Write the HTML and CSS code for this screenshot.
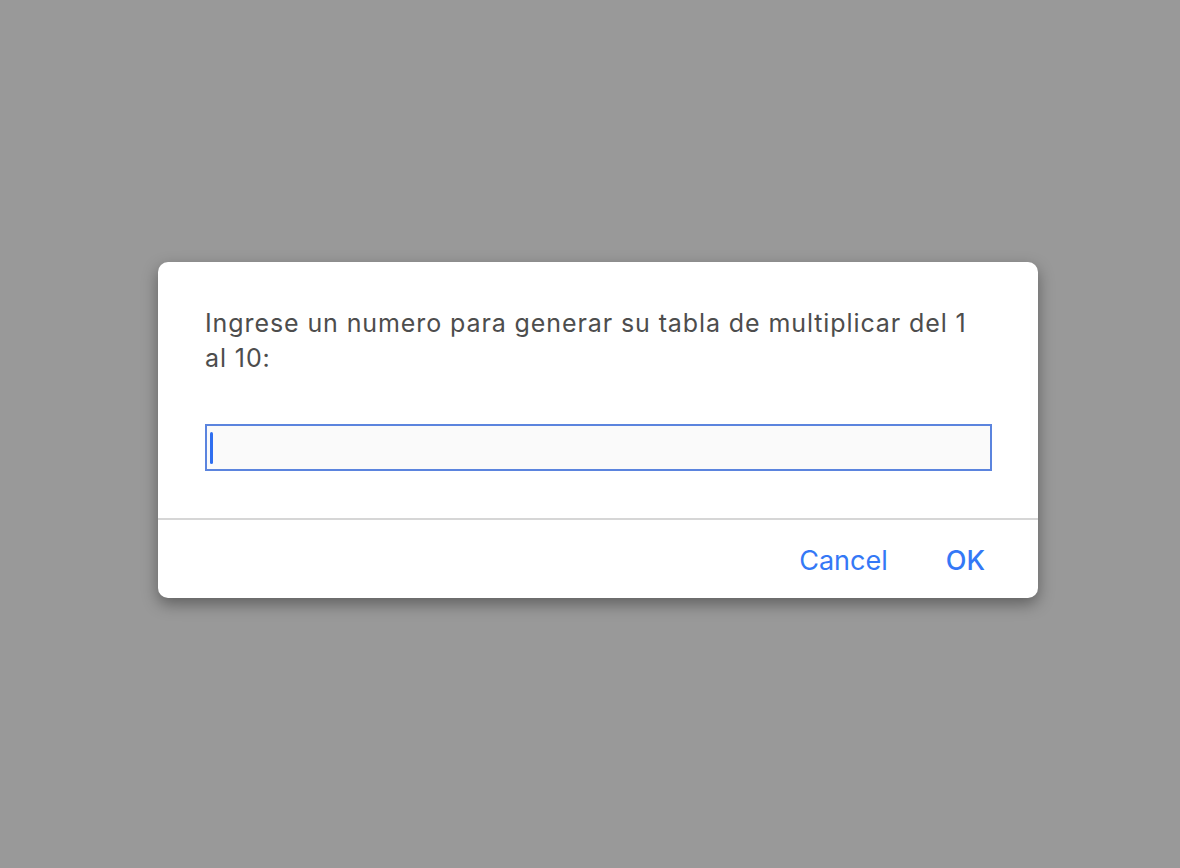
FILE: index.html
```html
<!DOCTYPE html>
<html lang="es">
<head>
<meta charset="utf-8">
<title>Prompt</title>
<link rel="stylesheet" href="styles.css">
</head>
<body>
<div class="overlay">
  <div class="dialog">
    <div class="body">
      <p class="message">Ingrese un numero para generar su tabla de multiplicar del 1 al 10:</p>
      <div class="field"><span class="caret"></span></div>
    </div>
    <div class="footer">
      <button class="btn">Cancel</button>
      <button class="btn ok">OK</button>
    </div>
  </div>
</div>
</body>
</html>
```
FILE: styles.css
```css
html, body {
  margin: 0;
  padding: 0;
  height: 100%;
}
body {
  background: #999999;
  font-family: Inter, "Noto Sans", sans-serif;
}
.overlay {
  height: 100%;
  display: flex;
  justify-content: center;
  padding-top: 262px;
  padding-left: 16px;
  box-sizing: border-box;
}
.dialog {
  width: 880px;
  height: 336px;
  background: #ffffff;
  border-radius: 10px;
  box-shadow: 0 6px 16px rgba(0, 0, 0, 0.38);
  display: flex;
  flex-direction: column;
  box-sizing: border-box;
}
.body {
  padding: 44px 46px 0 47px;
  height: 258px;
  box-sizing: border-box;
  border-bottom: 2px solid #d6d6d6;
}
.message {
  margin: 0;
  font-size: 25px;
  line-height: 35px;
  letter-spacing: 0.9px;
  color: #4d4d4d;
  width: 787px;
}
.field {
  margin-top: 48px;
  height: 47px;
  box-sizing: border-box;
  border: 2px solid #5b84de;
  background: #fafafa;
  display: flex;
  align-items: center;
  padding-left: 3px;
}
.caret {
  width: 3px;
  height: 32px;
  border-radius: 2px;
  background: #2f6ff0;
}
.footer {
  flex: 1;
  display: flex;
  justify-content: flex-end;
  align-items: center;
  gap: 58px;
  padding: 2px 53px 0 0;
}
.btn {
  border: none;
  background: none;
  padding: 0;
  font-family: Inter, "Noto Sans", sans-serif;
  font-size: 27px;
  color: #3478f6;
}
.btn.ok {
  font-weight: 500;
}
```
